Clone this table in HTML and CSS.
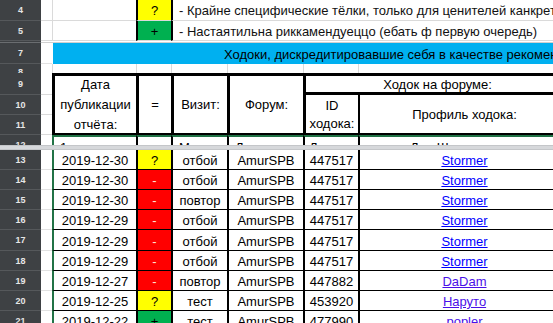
FILE: index.html
```html
<!DOCTYPE html>
<html lang="ru">
<head>
<meta charset="utf-8">
<title>Ходоки</title>
<link rel="stylesheet" href="styles.css">
</head>
<body>
<div class="sheet">
  <div class="row top r4">
    <div class="rh">4</div>
    <div class="c ca"></div>
    <div class="c cdate"></div>
    <div class="c mark yel">?</div>
    <div class="c note">- Крайне специфические тёлки, только для ценителей канкретнава жанра</div>
  </div>
  <div class="row top r5">
    <div class="rh">5</div>
    <div class="c ca"></div>
    <div class="c cdate"></div>
    <div class="c mark grn">+</div>
    <div class="c note">- Настаятильна риккамендуеццо (ебать ф первую очередь)</div>
  </div>
  <div class="row r6">
    <div class="rh"></div>
    <div class="hidden-line"></div>
  </div>
  <div class="row r7">
    <div class="rh">7</div>
    <div class="c ca"></div>
    <div class="banner">Ходоки, дискредитировавшие себя в качестве рекомендателей</div>
  </div>
  <div class="row r8">
    <div class="rh rh-cut">8</div>
    <div class="g"></div>
    <div class="g gl"></div>
    <div class="g gl"></div>
    <div class="g gl"></div>
    <div class="g gl"></div>
    <div class="g gl"></div>
    <div class="g gl"></div>
  </div>

  <div class="row head">
    <div class="rh h1">9</div>
    <div class="rh h2">10</div>
    <div class="rh h3">11</div>
    <div class="ga h1"></div>
    <div class="ga h2"></div>
    <div class="ga h3"></div>
    <div class="hc hdate">Дата<br>публикации<br>отчёта:</div>
    <div class="hc hmark">=</div>
    <div class="hc hvisit">Визит:</div>
    <div class="hc hforum">Форум:</div>
    <div class="hc hhodok">Ходок на форуме:</div>
    <div class="hc hid">ID<br>ходока:</div>
    <div class="hc hprof">Профиль ходока:</div>
  </div>

  <div class="row r12">
    <div class="rh rh-cut12">12</div>
    <div class="c ca"></div>
    <div class="s sfirst"><span class="peek p1">1</span></div>
    <div class="s"></div>
    <div class="s"><span class="peek p2">М</span></div>
    <div class="s"><span class="peek p3">Д</span></div>
    <div class="s"><span class="peek p4">Д</span></div>
    <div class="s"><span class="peek p5">Д&nbsp;&nbsp;&nbsp;&nbsp;&nbsp;Ш</span></div>
  </div>

  <div class="freeze"></div>

  <div class="row dr">
    <div class="rh">13</div><div class="c ca"></div>
    <div class="d dfirst">2019-12-30</div><div class="d yel">?</div><div class="d">отбой</div><div class="d">AmurSPB</div><div class="d">447517</div><div class="d"><a class="lnk" href="#">Stormer</a></div>
  </div>
  <div class="row dr">
    <div class="rh">14</div><div class="c ca"></div>
    <div class="d dfirst">2019-12-30</div><div class="d red">-</div><div class="d">отбой</div><div class="d">AmurSPB</div><div class="d">447517</div><div class="d"><a class="lnk" href="#">Stormer</a></div>
  </div>
  <div class="row dr">
    <div class="rh">15</div><div class="c ca"></div>
    <div class="d dfirst">2019-12-30</div><div class="d red">-</div><div class="d">повтор</div><div class="d">AmurSPB</div><div class="d">447517</div><div class="d"><a class="lnk" href="#">Stormer</a></div>
  </div>
  <div class="row dr">
    <div class="rh">16</div><div class="c ca"></div>
    <div class="d dfirst">2019-12-29</div><div class="d red">-</div><div class="d">отбой</div><div class="d">AmurSPB</div><div class="d">447517</div><div class="d"><a class="lnk" href="#">Stormer</a></div>
  </div>
  <div class="row dr dr-tall">
    <div class="rh">17</div><div class="c ca"></div>
    <div class="d dfirst">2019-12-29</div><div class="d red">-</div><div class="d">отбой</div><div class="d">AmurSPB</div><div class="d">447517</div><div class="d"><a class="lnk" href="#">Stormer</a></div>
  </div>
  <div class="row dr">
    <div class="rh">18</div><div class="c ca"></div>
    <div class="d dfirst">2019-12-29</div><div class="d red">-</div><div class="d">отбой</div><div class="d">AmurSPB</div><div class="d">447517</div><div class="d"><a class="lnk" href="#">Stormer</a></div>
  </div>
  <div class="row dr">
    <div class="rh">19</div><div class="c ca"></div>
    <div class="d dfirst">2019-12-27</div><div class="d red">-</div><div class="d">повтор</div><div class="d">AmurSPB</div><div class="d">447882</div><div class="d"><a class="lnk visited" href="#">DaDam</a></div>
  </div>
  <div class="row dr">
    <div class="rh">20</div><div class="c ca"></div>
    <div class="d dfirst">2019-12-25</div><div class="d yel">?</div><div class="d">тест</div><div class="d">AmurSPB</div><div class="d">453920</div><div class="d"><a class="lnk visited" href="#">Наруто</a></div>
  </div>
  <div class="row dr">
    <div class="rh">21</div><div class="c ca"></div>
    <div class="d dfirst">2019-12-22</div><div class="d grn">+</div><div class="d">тест</div><div class="d">AmurSPB</div><div class="d">477990</div><div class="d"><a class="lnk visited" href="#">popler</a></div>
  </div>
</div>
</body>
</html>
```

FILE: styles.css
```css
* { box-sizing: border-box; margin: 0; padding: 0; }
html, body { width: 553px; height: 323px; overflow: hidden; background: #fff; }
body {
  font-family: "Liberation Sans", Arial, sans-serif;
  font-size: 13px;
  color: #000;
}
.sheet { width: 569px; }
.row {
  display: grid;
  grid-template-columns: 41px 11px 84px 35px 56px 76px 55px 211px;
}

/* row headers */
.rh {
  background: #3e4144;
  color: #e6e6e6;
  font: bold 9px "Liberation Sans", Arial, sans-serif;
  display: flex;
  align-items: center;
  justify-content: center;
  border-bottom: 1px solid #55585b;
  overflow: hidden;
}

.c {
  display: flex;
  align-items: center;
  justify-content: center;
  white-space: nowrap;
  overflow: hidden;
}

/* top legend rows */
.r4 { height: 21px; }
.r5 { height: 20px; }
.top .c { border-bottom: 1px solid #dadada; }
.top .cdate { border-left: 1px solid #dadada; }
.top .mark { border-left: 2px solid #000; padding-top: 1px; }
.top .note {
  grid-column: 5 / -1;
  justify-content: flex-start;
  padding-left: 6px;
  padding-top: 1px;
  border-left: 2px solid #000;
  color: #111;
}
.yel { background: #ffff00; }
.grn { background: #00b050; }
.red { background: #ff0000; }

.r6 { height: 2px; }
.r6 .rh { border-bottom: 1px solid #6a6d70; }
.hidden-line { grid-column: 2 / -1; border-bottom: 1px solid #d0d0d0; }

.r7 { height: 21px; }
.banner {
  grid-column: 3 / -1;
  margin-left: 1px;
  background: #00b0f0;
  display: flex;
  align-items: center;
  padding-left: 171px;
  padding-top: 1px;
  white-space: nowrap;
  overflow: hidden;
}

.r8 { height: 9px; }
.rh-cut { align-items: flex-start; padding-top: 3px; line-height: 11px; border-bottom: none; }
.gl { border-left: 1px solid #dadada; }

/* header block */
.head { grid-template-rows: 22px 20px 20px; }
.head .h1 { grid-row: 1; }
.head .h2 { grid-row: 2; }
.head .h3 { grid-row: 3; }
.head .rh { grid-column: 1; }
.ga { grid-column: 2; border-bottom: 1px solid #dadada; }
.hc {
  border-left: 3px solid #000;
  border-top: 3px solid #000;
  border-bottom: 2px solid #000;
  display: flex;
  align-items: center;
  justify-content: center;
  text-align: center;
  white-space: nowrap;
}
.hdate { grid-column: 3; grid-row: 1 / 4; line-height: 20px; padding-top: 1px; }
.hmark { grid-column: 4; grid-row: 1 / 4; }
.hvisit { grid-column: 5; grid-row: 1 / 4; }
.hforum { grid-column: 6; grid-row: 1 / 4; }
.hhodok { grid-column: 7 / 9; grid-row: 1; border-bottom: 3px solid #000; padding-top: 1px; }
.hid { grid-column: 7; grid-row: 2 / 4; border-top: none; line-height: 18px; padding-top: 2px; }
.hprof { grid-column: 8; grid-row: 2 / 4; border-top: none; border-left-width: 2px; padding-top: 1px; }

/* row 12 (partly under the freeze line) */
.r12 { height: 10px; }
.rh-cut12 { align-items: flex-start; padding-top: 5px; line-height: 11px; border-bottom: none; }
.r12 .ca { border-bottom: none; }
.s {
  border-left: 2px solid #000;
  border-top: 2px solid #217346;
  overflow: hidden;
  position: relative;
  line-height: 20px;
  white-space: nowrap;
}
.s.sfirst { border-left-color: #217346; }
.peek { display: block; padding-top: 1px; }
.p1 { padding-left: 6px; }
.p2 { padding-left: 6px; }
.p3 { padding-left: 6px; }
.p4 { padding-left: 4px; }
.p5 { padding-left: 50px; }

.freeze {
  height: 5px;
  background: #d6d8db;
  border-top: 1px solid #c4c6c9;
  border-bottom: 1px solid #c4c6c9;
  width: 553px;
}

/* data rows */
.dr { height: 20px; }
.dr-tall { height: 21px; }
.ca { border-bottom: 1px solid #e2e2e2; }
.d {
  border-left: 2px solid #000;
  border-bottom: 1px solid #000;
  display: flex;
  align-items: center;
  justify-content: center;
  padding-top: 2px;
  white-space: nowrap;
  overflow: hidden;
}
.d.dfirst { border-left-color: #217346; }
.d.red { color: #ffe0d0; }
.lnk { color: #0000ff; text-decoration: underline; }
.lnk.visited { color: #4a10e8; }
```
